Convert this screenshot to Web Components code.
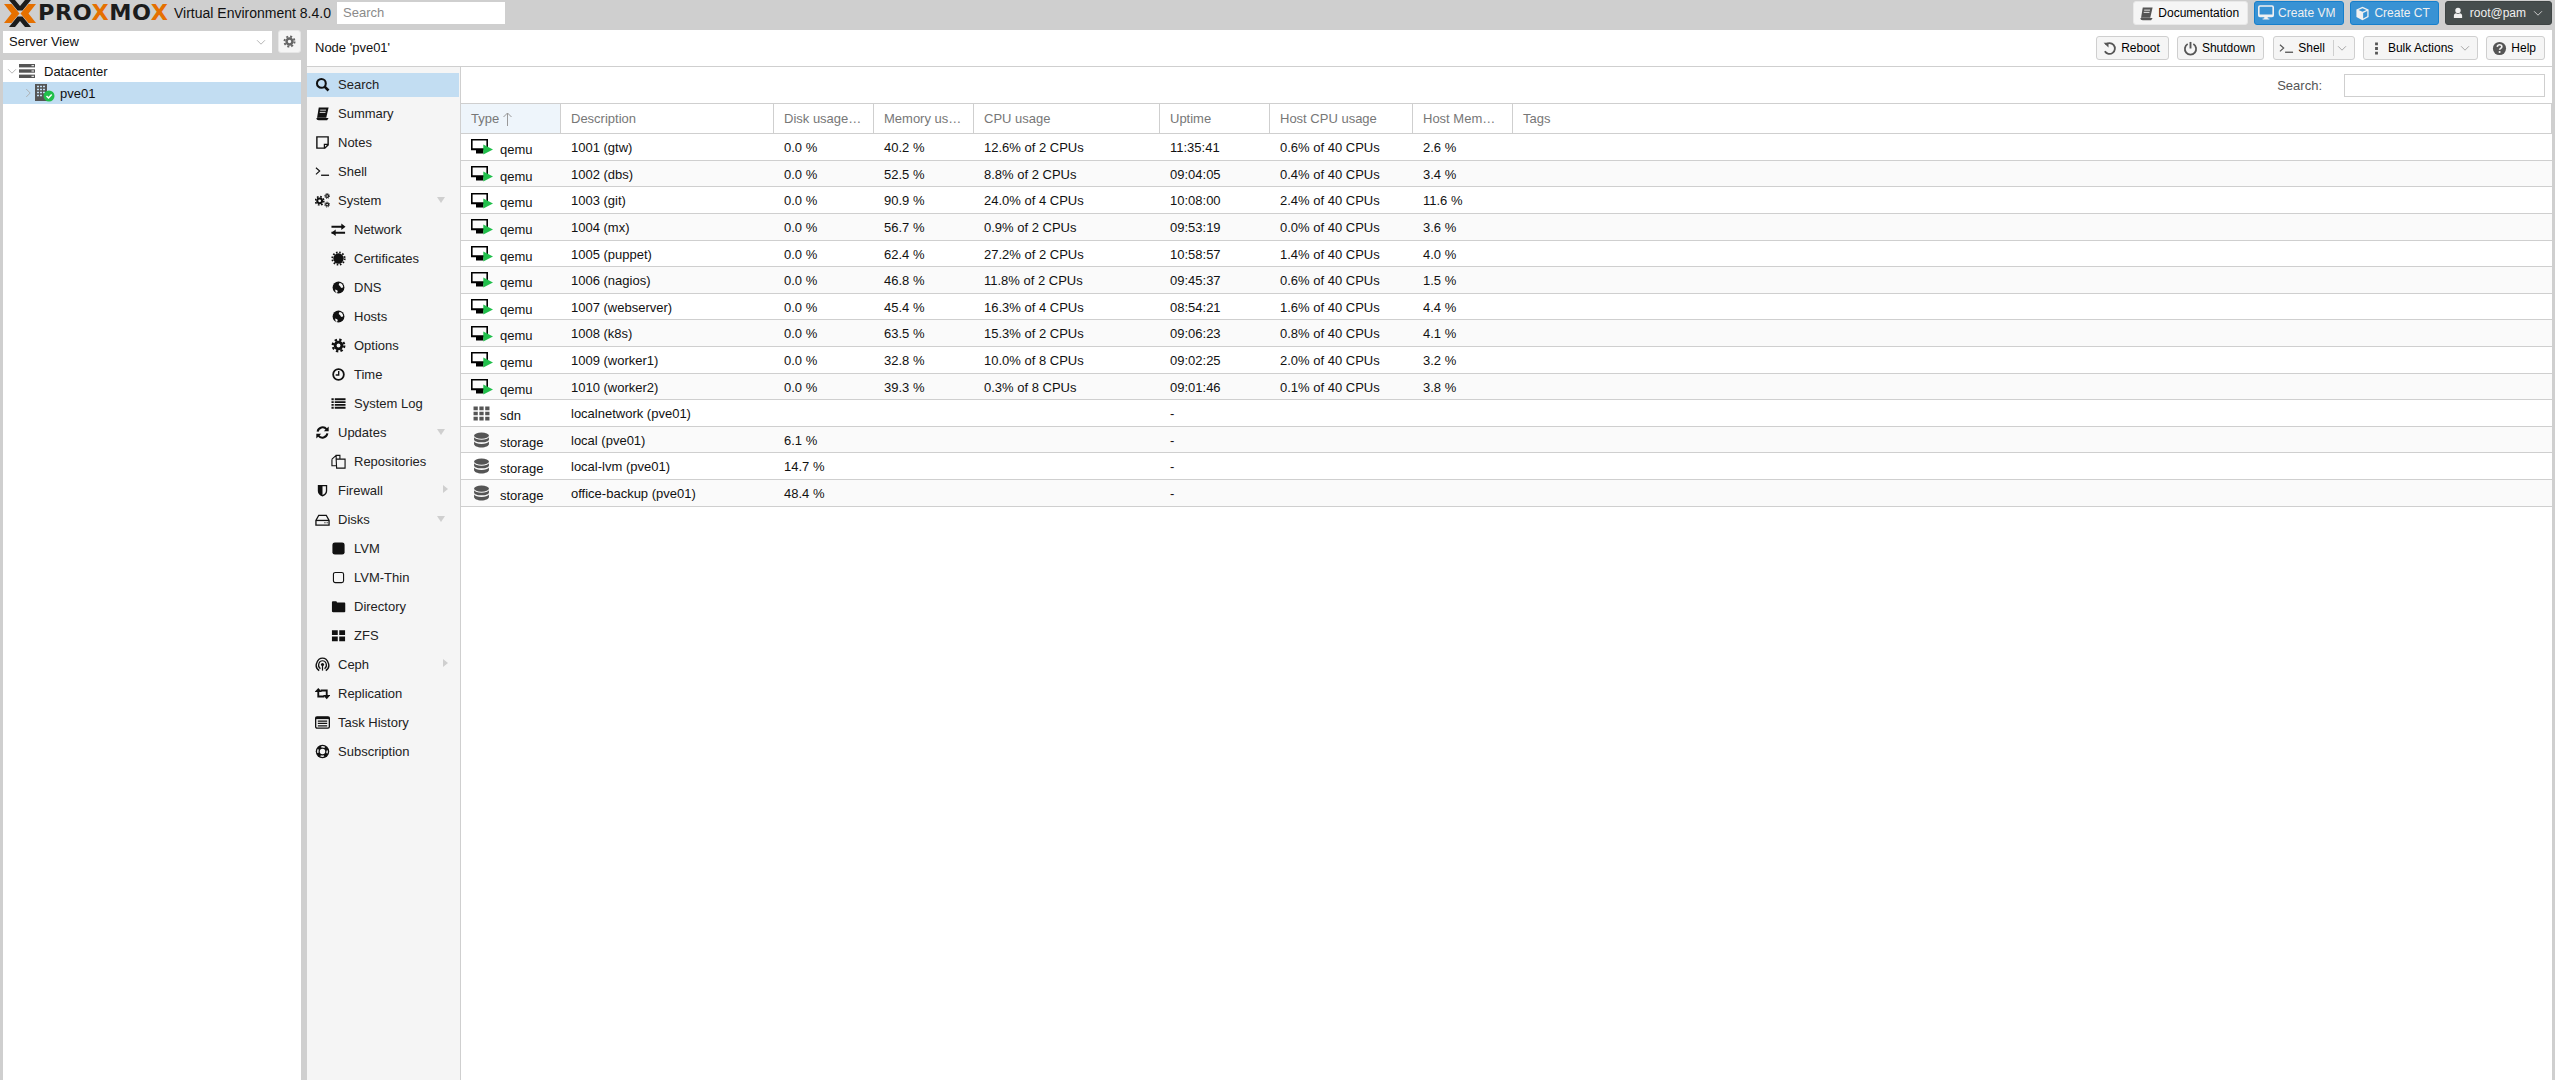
<!DOCTYPE html>
<html><head><meta charset="utf-8"><title>pve01 - Proxmox Virtual Environment</title>
<style>
html,body{margin:0;height:100%;overflow:hidden}
body{background:#cfcfcf;font:13px "Liberation Sans",Arial,sans-serif;color:#000}
pve-app{height:100vh}
</style></head><body>
<pve-app></pve-app>
<script>
const g=`<circle cx="8" cy="8" r="3.6" fill="none" stroke="currentColor" stroke-width="3"/><circle cx="8" cy="8" r="6.2" fill="none" stroke="currentColor" stroke-width="2.4" stroke-dasharray="2.5 2.37"/>`;
const ICONS={
search:`<circle cx="6.8" cy="6.8" r="4.7" fill="none" stroke="currentColor" stroke-width="2.2"/><path d="M10.2 10.2l4.2 4.2" stroke="currentColor" stroke-width="2.8"/>`,
book:`<path d="M4 1.5h10.5L12 12.5H2.2z" fill="currentColor"/><path d="M2 12.8c0 1.6 1 1.9 2 1.9h8.6l.8-1.2H4c-1 0-.9-.7-.4-1" fill="none" stroke="currentColor" stroke-width="1.2"/><path d="M5.5 4.4h6.2M5 6.8h6.2" stroke="#fff" stroke-width=".9"/>`,
note:`<path d="M2 2h12v8.5L10.5 14H2z" fill="none" stroke="currentColor" stroke-width="1.5"/><path d="M10 14v-4h4" fill="none" stroke="currentColor" stroke-width="1.3"/>`,
shell:`<path d="M1 4l4 3.5L1 11" fill="none" stroke="currentColor" stroke-width="1.2"/><path d="M6.5 12h8.5" stroke="currentColor" stroke-width="1.4"/>`,
cogs:`<g transform="translate(-.8 2.6) scale(.72)">${g}</g><g transform="translate(9.6 -.2) scale(.42)">${g}</g><g transform="translate(9.6 9) scale(.42)">${g}</g>`,
exchange:`<path d="M0.5 5h11.5M0.5 11.5H15" stroke="currentColor" stroke-width="2"/><path d="M11 1.5L15.5 5 11 8.5zM5 8L.5 11.5 5 15z" fill="currentColor"/>`,
cert:`<circle cx="8" cy="8" r="5.5" fill="currentColor"/><circle cx="8" cy="8" r="6.6" fill="none" stroke="currentColor" stroke-width="2" stroke-dasharray="1.7 1.75"/>`,
globe:`<circle cx="8" cy="8" r="6.3" fill="currentColor"/><path d="M9 3.2c2 .2 3.7 1.5 4 4.2-.9 1-1.5 1.3-2.4.7-.8-.6-.6-1.5-1.3-1.9-.8-.5-1.2-.8-.9-1.8zM4.5 10c1 .1 2 .6 2.6 1.5.3 1-.4 2-.8 2.4C5 13 4.2 11.5 4.5 10z" fill="#f5f5f5"/>`,
gear:g,
clock:`<circle cx="8" cy="8" r="5.7" fill="none" stroke="currentColor" stroke-width="1.9"/><path d="M8.2 4.3v4.2H5" fill="none" stroke="currentColor" stroke-width="1.5"/>`,
list:`<path d="M.5 3.5h2.4M.5 6.5h2.4M.5 9.5h2.4M.5 12.5h2.4M4 3.5h11.5M4 6.5h11.5M4 9.5h11.5M4 12.5h11.5" stroke="currentColor" stroke-width="2"/>`,
refresh:`<path d="M2.800 7A5.400 5.400 0 0 1 12.400 4.600" fill="none" stroke="currentColor" stroke-width="2.200"/><path d="M14.600 1.500v5.200H9.400z" fill="currentColor"/><path d="M13.200 9a5.400 5.400 0 0 1-9.600 2.400" fill="none" stroke="currentColor" stroke-width="2.200"/><path d="M1.400 14.500V9.300h5.200z" fill="currentColor"/>`,
copy:`<path d="M5.500 5.500V1.500h4l0 4M1 5.500l4.500-4M1 5.500v7h5M5.500 5.500h9.500V15H6z" fill="none" stroke="currentColor" stroke-width="1.200"/>`,
shield:`<path d="M3 2h10v6.500c0 3-2.500 4.800-5 6-2.500-1.200-5-3-5-6z" fill="currentColor"/><path d="M8 3.500h3.600v5c0 2-1.800 3.400-3.600 4.400z" fill="#f5f5f5"/>`,
hdd:`<path d="M4 3.500h8l3 5.500v5H1V9z" fill="none" stroke="currentColor" stroke-width="1.400"/><path d="M1 9h14" stroke="currentColor" stroke-width="1.400"/><path d="M10 11.500h1.200M12.400 11.500h1.200" stroke="currentColor" stroke-width="1.200"/>`,
square:`<rect x="1.500" y="1.500" width="13" height="13" rx="2.600" fill="currentColor"/>`,
squareo:`<rect x="2.600" y="2.600" width="10.800" height="10.800" rx="2" fill="none" stroke="currentColor" stroke-width="1.200"/>`,
folder:`<path d="M1 3.500c0-.8.500-1.200 1.200-1.200h3c.8 0 1 .6 1.200 1.400h7.600c.8 0 1.200.5 1.200 1.200V13c0 .7-.5 1-1.200 1H2.200c-.7 0-1.200-.4-1.200-1z" fill="currentColor"/>`,
th:`<path d="M1 2.500h6.200v5H1zM8.800 2.500H15v5H8.800zM1 9h6.200v5H1zM8.800 9H15v5H8.800z" fill="currentColor"/>`,
ceph:`<g fill="none" stroke="currentColor"><path d="M4.500 14.500C1.500 12.500.8 9 1.800 6.400 3 3 5.500 1.200 8 1.200s5 1.800 6.200 5.200c1 2.600.3 6.100-2.700 8.100" stroke-width="1.500"/><path d="M5.800 12.500C3.800 11 3.500 8.800 4.100 7.100 4.800 5.100 6.300 4 8 4s3.200 1.100 3.900 3.100c.6 1.700.3 3.900-1.700 5.400" stroke-width="1.300"/></g><circle cx="8" cy="8" r="1.700" fill="currentColor"/><path d="M8 9v5.500" stroke="currentColor" stroke-width="1.300"/>`,
retweet:`<path d="M3.500 5v6.200h6.500" fill="none" stroke="currentColor" stroke-width="2"/><path d="M3.500 2L7.500 6.500h-8z" fill="currentColor"/><path d="M12.500 11V4.800H6" fill="none" stroke="currentColor" stroke-width="2"/><path d="M12.500 14L8.500 9.500h8z" fill="currentColor"/>`,
listalt:`<rect x=".7" y="2" width="14.600" height="12" rx="1.500" fill="none" stroke="currentColor" stroke-width="1.400"/><rect x=".7" y="2" width="14.600" height="2.400" fill="currentColor"/><path d="M3 6.500h10M3 9h10M3 11.500h10" stroke="currentColor" stroke-width="1.300"/>`,
support:`<circle cx="8" cy="8" r="7.200" fill="currentColor"/><circle cx="8" cy="8" r="2.900" fill="#f5f5f5"/><circle cx="8" cy="8" r="5" fill="none" stroke="#f5f5f5" stroke-width="1.500" stroke-dasharray="3.800 4.054" stroke-dashoffset="1.900"/>`,
reboot:`<path d="M3.800 3.900A5.800 5.800 0 1 1 3 11" fill="none" stroke="currentColor" stroke-width="1.900"/><path d="M1.700 1.800h5.200V7z" fill="currentColor"/>`,
power:`<path d="M5 3.300a6 6 0 1 0 6 0" fill="none" stroke="currentColor" stroke-width="1.900"/><path d="M8 1v7" stroke="currentColor" stroke-width="2"/>`,
dots:`<path d="M8 1.500v3M8 6.500v3M8 11.500v3" stroke="currentColor" stroke-width="3"/>`,
help:`<circle cx="8" cy="8" r="7" fill="currentColor"/><path d="M5.600 6.200c.2-1.500 1.200-2.200 2.500-2.200s2.400.8 2.400 2c0 1.800-2.400 1.800-2.400 3.400" fill="none" stroke="#f5f5f5" stroke-width="1.700"/><path d="M8.100 10.700v2" stroke="#f5f5f5" stroke-width="1.800"/>`,
desktop:`<rect x=".8" y="1" width="14.400" height="10.500" rx="1.200" fill="none" stroke="currentColor" stroke-width="1.600"/><path d="M.8 9.500h14.400v1.200c0 .6-.5 1-1 1H1.800c-.5 0-1-.4-1-1z M6.500 11.500h3l.4 2h1.500v1H4.600v-1h1.500z" fill="currentColor"/>`,
cube:`<path d="M8 .8l6.500 3v8L8 15.200 1.500 11.800v-8z" fill="currentColor"/><path d="M8 2.400l4.200 1.900L8 6.200 3.800 4.300zM8.700 7.400l4.400-2v5.500l-4.400 2.300z" fill="#3892d4"/>`,
user:`<circle cx="8" cy="4.600" r="3.600" fill="currentColor"/><path d="M2.500 14.500v-2.700c0-2 1.300-3.300 3-3.500.8.600 1.600.9 2.500.9s1.700-.3 2.500-.9c1.700.2 3 1.500 3 3.500v2.700z" fill="currentColor"/>`,
chev:`<path d="M3.500 6l4.500 4.500L12.500 6" fill="none" stroke="currentColor" stroke-width="1"/>`,
chevr:`<path d="M6 3.500L10.500 8 6 12.500" fill="none" stroke="currentColor" stroke-width="1"/>`,
server:`<rect x="0" y="1" width="16" height="3.400" fill="currentColor"/><rect x="0" y="6.300" width="16" height="3.400" fill="currentColor"/><rect x="0" y="11.600" width="16" height="3.400" fill="currentColor"/><path d="M12.500 2.700H15M12.500 8H15M12.500 13.300H15" stroke="#fff" stroke-width="1"/>`,
sdn:`<path d="M.5 1.500h4v3.400h-4zM6 1.500h4v3.400H6zM11.500 1.500h4v3.400h-4zM.5 6.300h4v3.400h-4zM6 6.300h4v3.400H6zM11.500 6.300h4v3.400h-4zM.5 11.100h4v3.400h-4zM6 11.100h4v3.400H6zM11.500 11.100h4v3.400h-4z" fill="currentColor"/>`,
db:`<ellipse cx="8" cy="3.400" rx="7" ry="2.900" fill="currentColor"/><path d="M1 5v2c0 1.600 3.100 2.700 7 2.700s7-1.100 7-2.700V5c-.8 1.500-3.600 2.300-7 2.300S1.800 6.500 1 5zM1 9v2.400C1 13.100 4.100 14.700 8 14.700s7-1.600 7-3.300V9c-.8 1.500-3.600 2.300-7 2.300S1.800 10.500 1 9z" fill="currentColor"/>`
};
const svg=(n,s=16,st='')=>`<svg viewBox="0 0 16 16" width="${s}" height="${s}" style="display:block;flex:none;${st}" aria-hidden="true">${ICONS[n]}</svg>`;
function def(name,css,html){customElements.define(name,class extends HTMLElement{
  constructor(){super();this.attachShadow({mode:'open'});}
  connectedCallback(){ if(!this._r){this._r=1;this.shadowRoot.innerHTML=`<style>${css}</style>${typeof html==='function'?html(this):html}`;} }
});}

def('pve-logo',`:host{display:block;width:170px;height:30px;position:relative;flex:none}
svg{position:absolute;left:4px;top:0}
.t{position:absolute;left:38px;top:0;font:bold 20.500px/26px "DejaVu Sans",sans-serif;color:#1c1c1c;white-space:nowrap;transform:scaleX(1.090);transform-origin:0 50%;letter-spacing:.5px}
b{color:#e57000;font-weight:bold}`,
`<svg width="32" height="27" viewBox="0 0 32 27"><path d="M5 0h6l5 6 5-6h6L18.500 10.500h-5zM5 27h6l5-6 5 6h6L18.500 16.500h-5z" fill="#1c1c1c"/><path d="M0 4h7.500l8 9.500-8 9.500H0l7.500-9.500zM32 4h-7.500l-8 9.500 8 9.500H32l-7.500-9.500z" fill="#e57000"/></svg><span class="t">PRO<b>X</b>MO<b>X</b></span>`);

def('pve-btn',`:host{display:flex;align-items:center;box-sizing:border-box;height:var(--h,24px);border:1px solid #cfcfcf;border-radius:3px;background:#f5f5f5;color:#000;padding:0 8px 0 5px;white-space:nowrap;font-size:12px}
:host([kind=blue]){background:#3892d4;border-color:#157fcc;color:#f0f0f0}
:host([kind=dark]){background:#464d4d;border-color:#3e4444;color:#f0f0f0}
:host([kind=doc]){border-color:#e8e8e8}
.i{color:#555;margin-right:4px}
:host([kind=blue]) .i,:host([kind=dark]) .i{color:#f0f0f0}
:host([kind=dark]) .i{margin-right:6px}
.sep{width:1px;height:16px;background:#cfcfcf;margin:0 1px 0 8px}
.c{color:#9a9a9a;margin-left:5px}
.sep+.c{margin-left:0}
:host([kind=dark]) .c{color:#ddd}`,
h=>{const a=h.getAttribute('arrow');return `${h.getAttribute('icon')?`<span class="i">${svg(h.getAttribute('icon'),+h.getAttribute('size')||15)}</span>`:''}<slot></slot>${a==='split'?'<span class="sep"></span>':''}${a?`<span class="c">${svg('chev',14)}</span>`:''}`});

def('pve-topbar',`:host{display:flex;align-items:flex-start;height:30px;flex:none;padding-right:3px}
.v{margin:3px 0 0 4px;line-height:20px;color:#111;white-space:nowrap;width:163px;font-size:14px}
.s{box-sizing:border-box;width:168px;height:22px;margin-top:2px;background:#fff;color:#8a8a8a;padding-left:6px;line-height:22px}
.sp{flex:1}
.r{display:flex;gap:6px;margin-top:1px;--h:24px}`,
`<pve-logo></pve-logo><span class="v">Virtual Environment 8.4.0</span><div class="s">Search</div><span class="sp"></span>
<div class="r"><pve-btn kind="doc" icon="book">Documentation</pve-btn><pve-btn kind="blue" icon="desktop" size="16" style="padding-left:3px">Create VM</pve-btn><pve-btn kind="blue" icon="cube" style="padding-left:4px">Create CT</pve-btn><pve-btn kind="dark" icon="user" size="12" arrow="y" style="padding:0 6px">root@pam</pve-btn></div>`);

def('pve-tree',`:host{display:flex;flex-direction:column;width:298px;flex:none}
.top{display:flex;justify-content:space-between;height:30px;box-sizing:border-box;padding-top:1px}
.cb{box-sizing:border-box;width:269px;height:22px;background:#fff;line-height:22px;padding-left:6px;display:flex;align-items:center;justify-content:space-between;padding-right:4px;color:#111}
.cb span{color:#aaa}
.gear{box-sizing:border-box;width:23px;height:23px;margin-top:-1px;background:#f5f5f5;border:1px solid #e6e6e6;border-radius:3px;color:#666;display:flex;align-items:center;justify-content:center}
.tree{flex:1;background:#fff}
.row{height:22px;display:flex;align-items:center;color:#111}
.row.sel{background:#c2ddf2}
.chv{color:#aaa;display:block}`,
`<div class="top"><div class="cb">Server View<span>${svg('chev',14)}</span></div><div class="gear">${svg('gear',13)}</div></div>
<div class="tree"><div class="row" style="padding-left:2px"><span class="chv">${svg('chev',14)}</span><span style="color:#555">${svg('server',16)}</span><span style="margin-left:9px">Datacenter</span></div>
<div class="row sel" style="padding-left:18px"><span class="chv">${svg('chevr',14)}</span><svg width="20" height="18" viewBox="0 0 20 18" style="flex:none"><rect x="0" y="0" width="12" height="17" fill="#555"/><path d="M2 2.500h2M5 2.500h2M8 2.500h2M2 5.500h2M5 5.500h2M8 5.500h2M2 8.500h2M5 8.500h2M8 8.500h2M2 11.500h2M5 11.500h2" stroke="#c2ddf2" stroke-width="1.300"/><circle cx="14" cy="12" r="5.500" fill="#21bf4b"/><path d="M11.500 12l2 2 3.200-3.500" fill="none" stroke="#fff" stroke-width="1.500"/></svg><span style="margin-left:5px">pve01</span></div></div>`);

def('pve-menu-item',`:host{display:flex;align-items:center;height:29px;box-sizing:border-box;color:#222;position:relative}
.b{display:flex;align-items:center;height:24px;width:100%;padding-left:8px;box-sizing:border-box}
:host([sel]) .b{background:#c2ddf2}
:host([sub]) .b{padding-left:24px}
.i{color:#111;margin-right:8px;display:block}
.a{position:absolute;right:14px;top:11px;width:0;height:0;border:4.500px solid transparent;border-top:6px solid #cfcfcf;border-bottom:0}
.a.r{right:11px;top:9px;border:4.500px solid transparent;border-left:5px solid #cfcfcf;border-right:0}`,
h=>`<div class="b"><span class="i">${svg(h.getAttribute('icon'),15)}</span><slot></slot></div>${h.getAttribute('arrow')==='d'?'<span class="a"></span>':h.getAttribute('arrow')==='r'?'<span class="a r"></span>':''}`);

def('pve-menu',`:host{display:block;width:154px;flex:none;box-sizing:border-box;background:#f5f5f5;border-right:1px solid #cfcfcf;padding:3px 1px 0 0}`,`<slot></slot>`);

const COLS=[100,213,100,100,186,110,143,100,null];
const tpl=COLS.map(c=>c?c+'px':'1fr').join(' ');
const HEAD=['Type','Description','Disk usage…','Memory us…','CPU usage','Uptime','Host CPU usage','Host Mem…','Tags'];
const VM=[['1001 (gtw)','40.2 %','12.6% of 2 CPUs','11:35:41','0.6%','2.6 %'],['1002 (dbs)','52.5 %','8.8% of 2 CPUs','09:04:05','0.4%','3.4 %'],['1003 (git)','90.9 %','24.0% of 4 CPUs','10:08:00','2.4%','11.6 %'],['1004 (mx)','56.7 %','0.9% of 2 CPUs','09:53:19','0.0%','3.6 %'],['1005 (puppet)','62.4 %','27.2% of 2 CPUs','10:58:57','1.4%','4.0 %'],['1006 (nagios)','46.8 %','11.8% of 2 CPUs','09:45:37','0.6%','1.5 %'],['1007 (webserver)','45.4 %','16.3% of 4 CPUs','08:54:21','1.6%','4.4 %'],['1008 (k8s)','63.5 %','15.3% of 2 CPUs','09:06:23','0.8%','4.1 %'],['1009 (worker1)','32.8 %','10.0% of 8 CPUs','09:02:25','2.0%','3.2 %'],['1010 (worker2)','39.3 %','0.3% of 8 CPUs','09:01:46','0.1%','3.8 %']];
const ROWS=VM.map(v=>['qemu',v[0],'0.0 %',v[1],v[2],v[3],v[4]+' of 40 CPUs',v[5],'']).concat([['sdn','localnetwork (pve01)','','','','-','','',''],['storage','local (pve01)','6.1 %','','','-','','',''],['storage','local-lvm (pve01)','14.7 %','','','-','','',''],['storage','office-backup (pve01)','48.4 %','','','-','','','']]);
const qemu=`<svg width="22" height="16" viewBox="0 0 22 16" style="display:block;flex:none"><path d="M.8.800h15.400v9.400H.8z" fill="none" stroke="#000" stroke-width="1.600"/><path d="M0 9.500h13v1.800H0zM5 11h7.500v3.500H5z" fill="#000"/><path d="M12.300 5.500L22 10.500 12.300 15.500z" fill="#21bf4b"/></svg>`;
const icon=t=>t==='qemu'?qemu:`<span style="color:#555;display:block;margin-left:2px;width:20px">${svg(t==='sdn'?'sdn':'db',17)}</span>`;
const rowsHtml=ROWS.map((r,i)=>`<div class="r${i%2?' alt':''}"><div class="c t"><span class="ic">${icon(r[0])}</span><span class="tt">${r[0]}</span></div>${r.slice(1).map(c=>`<div class="c">${c}</div>`).join('')}</div>`).join('');
def('pve-grid',`:host{display:flex;flex-direction:column;flex:1;min-width:0;background:#fff}
.tb{height:36px;box-sizing:border-box;display:flex;align-items:center;justify-content:flex-end;padding:0 7px 0 0;color:#555}
.tb .in{box-sizing:border-box;width:201px;height:23px;border:1px solid #cfcfcf;margin-left:22px;background:#fff}
.h{display:grid;grid-template-columns:${tpl};height:31px;box-sizing:border-box;border-top:1px solid #cfcfcf;border-bottom:1px solid #cfcfcf;color:#777}
.h div{border-right:1px solid #cfcfcf;padding-left:10px;line-height:28px;overflow:hidden;white-space:nowrap;display:flex;align-items:center}
.h div:first-child{background:#eef5fb}
.b{padding-top:.2px}
.r{display:grid;grid-template-columns:${tpl};height:26.600px;box-sizing:border-box;border-bottom:1px solid #cfcfcf;color:#111}
.r.alt{background:#fafafa}
.c{padding-left:10px;line-height:27.500px;white-space:nowrap;overflow:hidden}
.c.t{display:flex;align-items:center}
.ic{display:block;width:29px;flex:none;margin-top:1px}
.tt{position:relative;top:3px}`,
`<div class="tb">Search:<div class="in"></div></div><div class="h">${HEAD.map((h,i)=>`<div>${h}${i?'':`<svg width="11" height="16" viewBox="0 0 11 16" style="margin-left:3px"><path d="M5.500 2v13M1.500 6l4-4 4 4" fill="none" stroke="#999" stroke-width="1"/></svg>`}</div>`).join('')}</div><div class="b">${rowsHtml}</div>`);

def('pve-node',`:host{display:flex;flex-direction:column;flex:1;min-width:0;background:#fff}
.bar{height:37px;flex:none;box-sizing:border-box;border-bottom:1px solid #cfcfcf;display:flex;align-items:center;padding:0 7px 0 8px;gap:8px;--h:24px}
.title{flex:1;color:#111;margin-top:-1px}
.main{flex:1;display:flex;min-height:0}`,
`<div class="bar"><span class="title">Node 'pve01'</span><pve-btn icon="reboot">Reboot</pve-btn><pve-btn icon="power">Shutdown</pve-btn><pve-btn icon="shell" arrow="split" style="padding-right:5px;margin-left:1px">Shell</pve-btn><pve-btn icon="dots" arrow="y" style="padding-right:5px">Bulk Actions</pve-btn><pve-btn icon="help">Help</pve-btn></div>
<div class="main"><pve-menu>${[
['search','Search',0,0,1],['book','Summary'],['note','Notes'],['shell','Shell'],['cogs','System',0,'d'],['exchange','Network',1],['cert','Certificates',1],['globe','DNS',1],['globe','Hosts',1],['gear','Options',1],['clock','Time',1],['list','System Log',1],['refresh','Updates',0,'d'],['copy','Repositories',1],['shield','Firewall',0,'r'],['hdd','Disks',0,'d'],['square','LVM',1],['squareo','LVM-Thin',1],['folder','Directory',1],['th','ZFS',1],['ceph','Ceph',0,'r'],['retweet','Replication'],['listalt','Task History'],['support','Subscription']
].map(([i,t,s,a,sel])=>`<pve-menu-item icon="${i}"${s?' sub':''}${a?` arrow="${a}"`:''}${sel?' sel':''}>${t}</pve-menu-item>`).join('')}</pve-menu><pve-grid></pve-grid></div>`);

def('pve-app',`:host{display:flex;flex-direction:column;height:100vh}
.m{flex:1;display:flex;min-height:0;padding:0 3px;gap:6px}`,
`<pve-topbar></pve-topbar><div class="m"><pve-tree></pve-tree><pve-node></pve-node></div>`);
</script>
</body></html>
